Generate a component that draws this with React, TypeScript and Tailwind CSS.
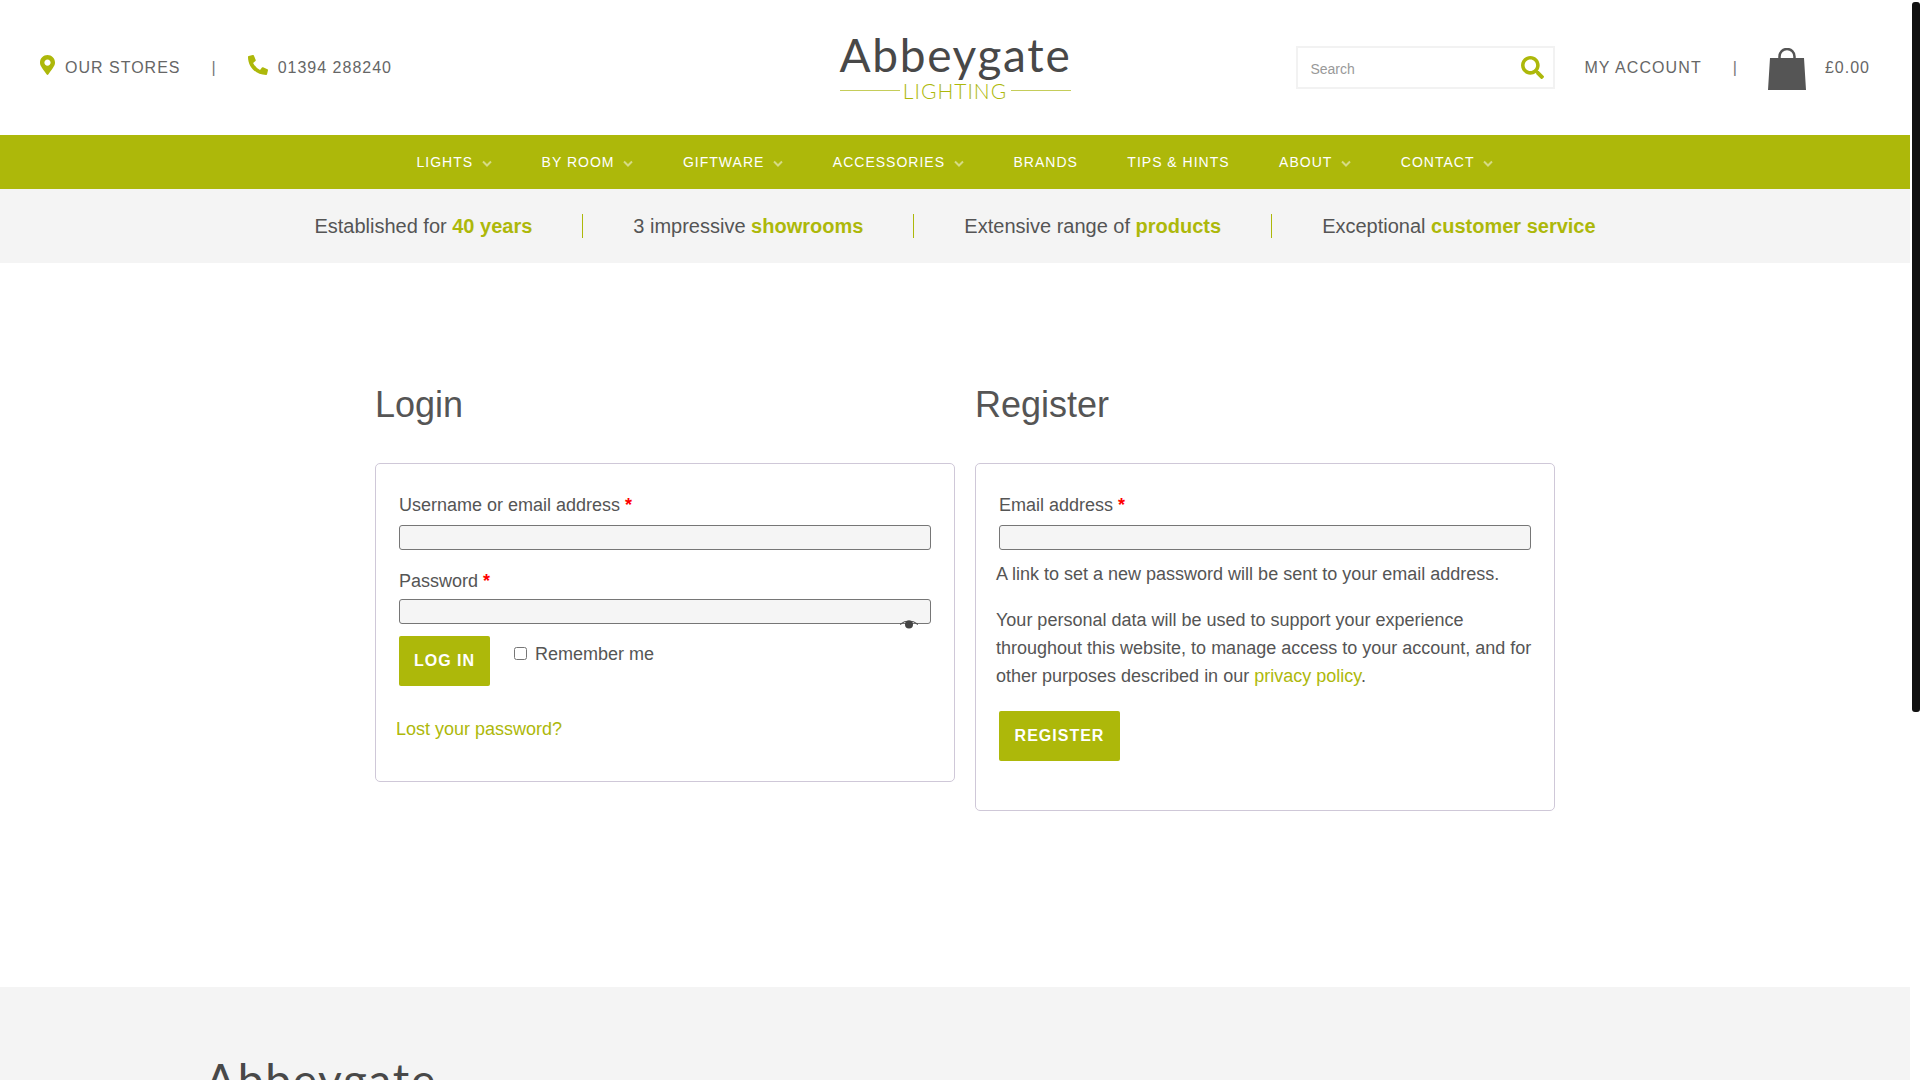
import React from 'react';
import { FaMapMarkerAlt, FaPhoneAlt, FaSearch } from 'react-icons/fa';

const navItems = [
  { label: 'LIGHTS', sub: true },
  { label: 'BY ROOM', sub: true },
  { label: 'GIFTWARE', sub: true },
  { label: 'ACCESSORIES', sub: true },
  { label: 'BRANDS', sub: false },
  { label: 'TIPS & HINTS', sub: false },
  { label: 'ABOUT', sub: true },
  { label: 'CONTACT', sub: true },
];

const strapline = [
  { text: 'Established for', strong: '40 years' },
  { text: '3 impressive', strong: 'showrooms' },
  { text: 'Extensive range of', strong: 'products' },
  { text: 'Exceptional', strong: 'customer service' },
];

const Logo = () => (
  <div className="w-[231px] font-['Lato','Open_Sans',sans-serif]">
    <div className="h-[46px] text-[46px] leading-[40px] tracking-[1.7px] text-[#484848] whitespace-nowrap">Abbeygate</div>
    <div className="flex items-center justify-between h-[20px]">
      <span className="w-[60px] h-px bg-[#c5cd5a]" />
      <span className="text-[21px] leading-[20px] font-light text-[#adb80a]">LIGHTING</span>
      <span className="w-[60px] h-px bg-[#c5cd5a]" />
    </div>
  </div>
);

const Required = () => <span className="text-[#ff0000] font-bold"> *</span>;

const Field = ({ label }: { label: string }) => (
  <label className="block px-[3px] leading-7 text-[18px] text-[#555]">
    {label}
    <Required />
  </label>
);

const TextInput = () => (
  <div className="px-[3px]">
    <input type="text" className="block w-full h-[25px] bg-[#f5f5f5] border border-[#767676] rounded-[3px]" />
  </div>
);

export default function App() {
  return (
    <div className="h-screen overflow-hidden flex bg-white font-['Liberation_Sans',Arial,sans-serif]">
      <div className="w-[1910px] shrink-0">
        {/* Top header */}
        <header className="h-[135px] px-[40px] grid grid-cols-[1fr_auto_1fr] items-center text-[#666] text-[16px] tracking-[1px]">
          <div className="flex items-center">
            <FaMapMarkerAlt className="w-[15px] h-[22px] -mt-[5px] text-[#adb80a]" />
            <span className="ml-[10px]">OUR STORES</span>
            <span className="mx-[31px] text-[#777]">|</span>
            <FaPhoneAlt className="w-[20px] h-[20px] -mt-[5px] text-[#adb80a]" />
            <span className="ml-[10px]">01394 288240</span>
          </div>
          <Logo />
          <div className="flex items-center justify-end">
            <div className="flex items-center justify-between w-[259px] h-[43px] pl-[12px] pr-[9px] border-2 border-[#f2f2f2]">
              <span className="text-[14px] tracking-normal text-[#999] mt-[3px]">Search</span>
              <FaSearch className="w-[23px] h-[23px] text-[#adb80a]" />
            </div>
            <span className="ml-[29px] tracking-[1.1px]">MY ACCOUNT</span>
            <span className="ml-[31px] mr-[30px] text-[#777]">|</span>
            <svg viewBox="0 0 38 42" className="w-[38px] h-[42px] mt-[2px]">
              <path d="M2 10h34l2 32H0z" fill="#555" />
              <path d="M11.5 11V8.5a7.5 7.5 0 0 1 15 0V11" fill="none" stroke="#555" strokeWidth="2.5" />
            </svg>
            <span className="ml-[19px]">£0.00</span>
          </div>
        </header>

        {/* Main nav */}
        <nav className="h-[54px] bg-[#adb80a] flex items-center justify-center gap-[49.5px] text-white text-[14px] tracking-[1px]">
          {navItems.map((item) => (
            <a key={item.label} className="flex items-center whitespace-nowrap">
              {item.label}
              {item.sub && (
                <svg viewBox="0 0 10 8" className="w-[10px] h-[8px] ml-[9px] mt-[3px] opacity-50">
                  <path d="M1 1.5l4 4 4-4" fill="none" stroke="#fff" strokeWidth="2" />
                </svg>
              )}
            </a>
          ))}
        </nav>

        {/* Strapline */}
        <div className="h-[74px] bg-[#f4f4f4] flex items-center justify-center text-[20px] text-[#555]">
          {strapline.map((item, i) => (
            <div key={item.strong} className={`h-[24px] flex items-center px-[50px] ${i > 0 ? 'border-l border-[#adb80a]' : ''}`}>
              <span>{item.text}</span>
              <strong className="ml-[5.56px] font-bold text-[#adb80a]">{item.strong}</strong>
            </div>
          ))}
        </div>

        {/* Account forms */}
        <main className="w-[1180px] h-[724px] ml-[375px] grid grid-cols-2 gap-x-[20px] items-start pt-[120px] text-[#555]">
          <section>
            <h2 className="h-[80px] pt-px text-[36px] leading-[42px] text-[#555]">Login</h2>
            <div className="h-[319px] border border-[#cfc8d8] rounded-[5px] pt-[27px] px-[20px]">
              <Field label="Username or email address" />
              <div className="mt-[6px]"><TextInput /></div>
              <div className="mt-[17px]"><Field label="Password" /></div>
              <div className="relative mt-[4px]">
                <TextInput />
                <svg viewBox="0 0 18 9" className="absolute right-[16px] top-[21px] w-[18px] h-[9px]">
                  <path d="M0 4.5C3 2 6 1 9 1s6 1 9 3.5" fill="none" stroke="#555" strokeWidth="1.2" />
                  <circle cx="9" cy="4.5" r="4" fill="#444" />
                </svg>
              </div>
              <div className="mt-[12px] px-[3px] flex items-start">
                <button className="w-[91px] h-[50px] bg-[#adb80a] rounded-[2px] text-white text-[16px] font-bold tracking-[1px]">LOG IN</button>
                <label className="ml-[24px] mt-[4px] flex items-center leading-7 text-[18px]">
                  <input type="checkbox" className="w-[13px] h-[13px] mr-[8px] -mt-[1px]" />
                  Remember me
                </label>
              </div>
              <p className="mt-[29px] leading-7 text-[18px] text-[#adb80a]">Lost your password?</p>
            </div>
          </section>
          <section>
            <h2 className="h-[80px] pt-px text-[36px] leading-[42px] text-[#555]">Register</h2>
            <div className="h-[348px] border border-[#cfc8d8] rounded-[5px] pt-[27px] px-[20px]">
              <Field label="Email address" />
              <div className="mt-[6px]"><TextInput /></div>
              <p className="mt-[10px] leading-7 text-[18px]">A link to set a new password will be sent to your email address.</p>
              <p className="mt-[18px] leading-7 text-[18px]">
                Your personal data will be used to support your experience throughout this website, to manage access to your account, and for other purposes described in our{' '}
                <span className="text-[#adb80a]">privacy policy</span>.
              </p>
              <button className="mt-[21px] ml-[3px] w-[121px] h-[50px] bg-[#adb80a] rounded-[2px] text-white text-[16px] font-bold tracking-[1px]">REGISTER</button>
            </div>
          </section>
        </main>

        {/* Footer, only its top edge shows above the fold */}
        <footer className="h-[651px] bg-[#f4f4f4] pt-[73px] pl-[205px]">
          <Logo />
        </footer>
      </div>

      {/* Page scrollbar */}
      <div className="w-[10px] pl-[2px] pt-[2px]">
        <div className="h-[710px] bg-[#111] rounded-[3px]" />
      </div>
    </div>
  );
}
